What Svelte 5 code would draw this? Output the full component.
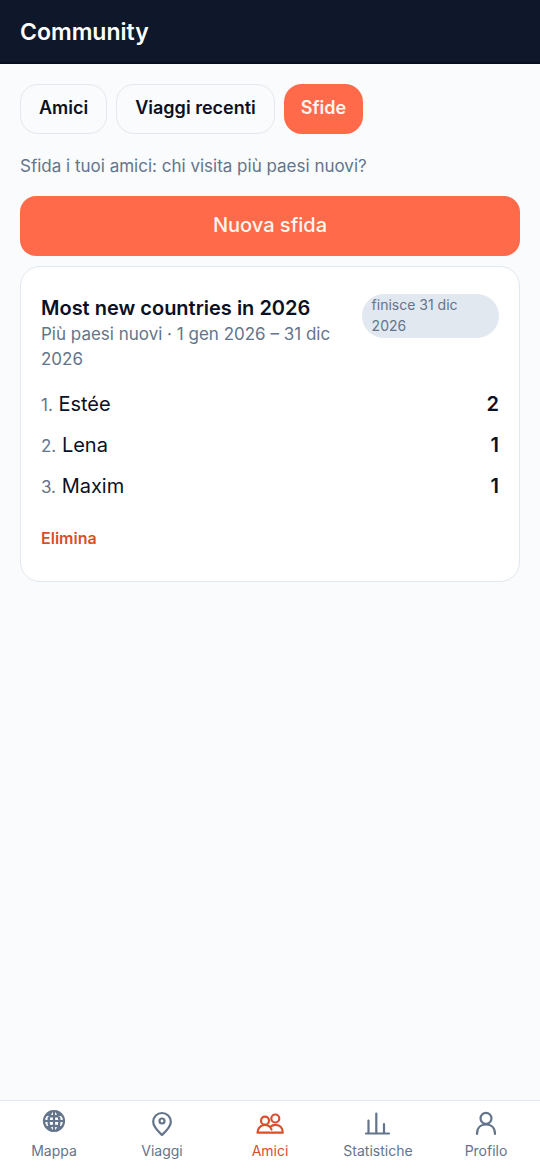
<script lang="ts">
  type Tab = { id: string; label: string };
  type Entry = { name: string; count: number };

  const tabs: Tab[] = [
    { id: 'friends', label: 'Amici' },
    { id: 'recent', label: 'Viaggi recenti' },
    { id: 'challenges', label: 'Sfide' },
  ];

  const ranking: Entry[] = [
    { name: 'Estée', count: 2 },
    { name: 'Lena', count: 1 },
    { name: 'Maxim', count: 1 },
  ];

  const navItems: Tab[] = [
    { id: 'map', label: 'Mappa' },
    { id: 'trips', label: 'Viaggi' },
    { id: 'community', label: 'Amici' },
    { id: 'stats', label: 'Statistiche' },
    { id: 'profile', label: 'Profilo' },
  ];

  let activeTab = $state('challenges');
</script>

<div class="app">
  <header class="topbar">
    <h1>Community</h1>
  </header>

  <main>
    <div class="tabs">
      {#each tabs as tab}
        <button
          type="button"
          class="tab"
          class:active={activeTab === tab.id}
          aria-pressed={activeTab === tab.id}
          onclick={() => (activeTab = tab.id)}
        >{tab.label}</button>
      {/each}
    </div>

    <p class="intro">Sfida i tuoi amici: chi visita più paesi nuovi?</p>

    <button type="button" class="primary">Nuova sfida</button>

    <article class="card">
      <div class="card-head">
        <div class="card-title">
          <h2>Most new countries in 2026</h2>
          <p>Più paesi nuovi · 1 gen 2026 – 31 dic 2026</p>
        </div>
        <span class="badge">finisce 31 dic 2026</span>
      </div>

      <ol class="ranking">
        {#each ranking as entry, i}
          <li>
            <span><small>{i + 1}.</small> {entry.name}</span>
            <strong>{entry.count}</strong>
          </li>
        {/each}
      </ol>

      <button type="button" class="delete">Elimina</button>
    </article>
  </main>

  <nav class="bottom-nav" aria-label="Navigazione">
    {#each navItems as item}
      <a href="#{item.id}" class:active={item.id === 'community'}>
        <svg viewBox="0 0 30 30" aria-hidden="true">
          {#if item.id === 'map'}
            <circle cx="15" cy="13" r="10" />
            <path d="M15 3v20M5 13h20M8 6.500c4 2.500 10 2.500 14 0M8 19.500c4-2.500 10-2.500 14 0M12.500 3.500c-4 5.500-4 13.500 0 19M17.500 3.500c4 5.500 4 13.500 0 19" />
          {:else if item.id === 'trips'}
            <path d="M15 27c-3.500-3.400-8.800-7.800-8.800-13.200a8.800 8.800 0 0 1 17.600 0c0 5.400-5.300 9.800-8.800 13.200z" />
            <circle cx="15" cy="13" r="2.500" />
          {:else if item.id === 'community'}
            <circle cx="10" cy="12.700" r="4" />
            <circle cx="20.300" cy="10.500" r="4" />
            <path d="M14.500 24.700H2.500c0-4.500 3-7.700 7.200-7.700 3.300 0 5.800 1.700 6.800 4.500M16 24.700h11.700c0-4.700-2.700-7.900-7-7.900-1.700 0-3 .4-4.200 1.200" />
          {:else if item.id === 'stats'}
            <path d="M3 25.500h23M5.500 25V12.500M13.300 25V5.500M21 25v-9" />
          {:else}
            <circle cx="15" cy="10.300" r="5.500" />
            <path d="M6 26c0-6 3.500-9.500 9-9.500s9 3.500 9 9.500" />
          {/if}
        </svg>
        <span>{item.label}</span>
      </a>
    {/each}
  </nav>
</div>

<style>
  :global(body) {
    margin: 0;
    background: #f9fbfd;
  }

  .app {
    display: flex;
    flex-direction: column;
    min-height: 100vh;
    color: #0b1023;
    font-family: Inter, "Liberation Sans", sans-serif;
    font-size: 20px;
    line-height: 26px;
  }

  h1,
  h2,
  p,
  ol {
    margin: 0;
    padding: 0;
  }

  button {
    font-family: inherit;
    cursor: pointer;
  }

  .topbar {
    padding: 17px 20px 15px;
    border-bottom: 2px solid #070d22;
    background: #0f172a;
    color: #ffffff;
  }

  h1 {
    font-size: 23px;
    font-weight: 600;
    line-height: 30px;
  }

  main {
    display: flex;
    flex: 1;
    flex-direction: column;
    padding: 20px;
  }

  .tabs {
    display: flex;
    gap: 9px;
  }

  .tab {
    padding: 11px 18px 13px;
    border: 1px solid #e2e8f0;
    border-radius: 18px;
    background: #f9fbfd;
    color: #0b1023;
    font-size: 18px;
    font-weight: 600;
    line-height: 24px;
  }

  .tab.active {
    padding: 12px 17px 14px;
    border: 0;
    background: #ff6b4a;
    color: #fff5f0;
  }

  .intro {
    margin: 20px 0 17px;
    color: #64748b;
    font-size: 17px;
    line-height: 25px;
  }

  .primary {
    padding: 16px 20px 18px;
    border: 0;
    border-radius: 16px;
    background: #ff6b4a;
    color: #fff5f0;
    font-size: 20px;
    font-weight: 500;
    line-height: 26px;
  }

  .card {
    margin-top: 10px;
    padding: 27px 20px 25px;
    border: 1px solid #e2e8f0;
    border-radius: 20px;
    background: #ffffff;
  }

  .card-head {
    display: flex;
    align-items: flex-start;
    gap: 20px;
  }

  .card-title {
    flex: 1;
  }

  h2 {
    font-size: 20px;
    font-weight: 600;
    line-height: 28px;
  }

  .card-title p {
    color: #64748b;
    font-size: 17px;
    line-height: 25px;
  }

  .badge {
    box-sizing: border-box;
    flex: 0 0 30%;
    padding: 0 10px 2px;
    border-radius: 22px;
    background: #e2e8f0;
    color: #64748b;
    font-size: 14px;
    line-height: 21px;
  }

  .ranking {
    margin-top: 12px;
    list-style: none;
  }

  .ranking li {
    display: flex;
    justify-content: space-between;
    padding: 6px 0 7px;
    line-height: 28px;
  }

  .ranking small {
    color: #64748b;
    font-size: 17px;
    line-height: 1;
  }

  .ranking strong {
    font-weight: 600;
  }

  .delete {
    margin-top: 13px;
    padding: 6px 0;
    border: 0;
    background: none;
    color: #d94f2b;
    font-size: 16px;
    font-weight: 600;
    line-height: 24px;
  }

  .bottom-nav {
    display: grid;
    grid-template-columns: repeat(5, 1fr);
    padding: 7px 0 9px;
    border-top: 1px solid #e2e8f0;
    background: #ffffff;
  }

  .bottom-nav a {
    display: flex;
    flex-direction: column;
    align-items: center;
    gap: 3px;
    color: #64748b;
    font-size: 14px;
    line-height: 20px;
    text-decoration: none;
  }

  .bottom-nav a.active {
    color: #d94f2b;
  }

  .bottom-nav svg {
    width: 30px;
    height: 30px;
    fill: none;
    stroke: currentColor;
    stroke-width: 2.2;
    stroke-linecap: round;
    stroke-linejoin: round;
  }
</style>
